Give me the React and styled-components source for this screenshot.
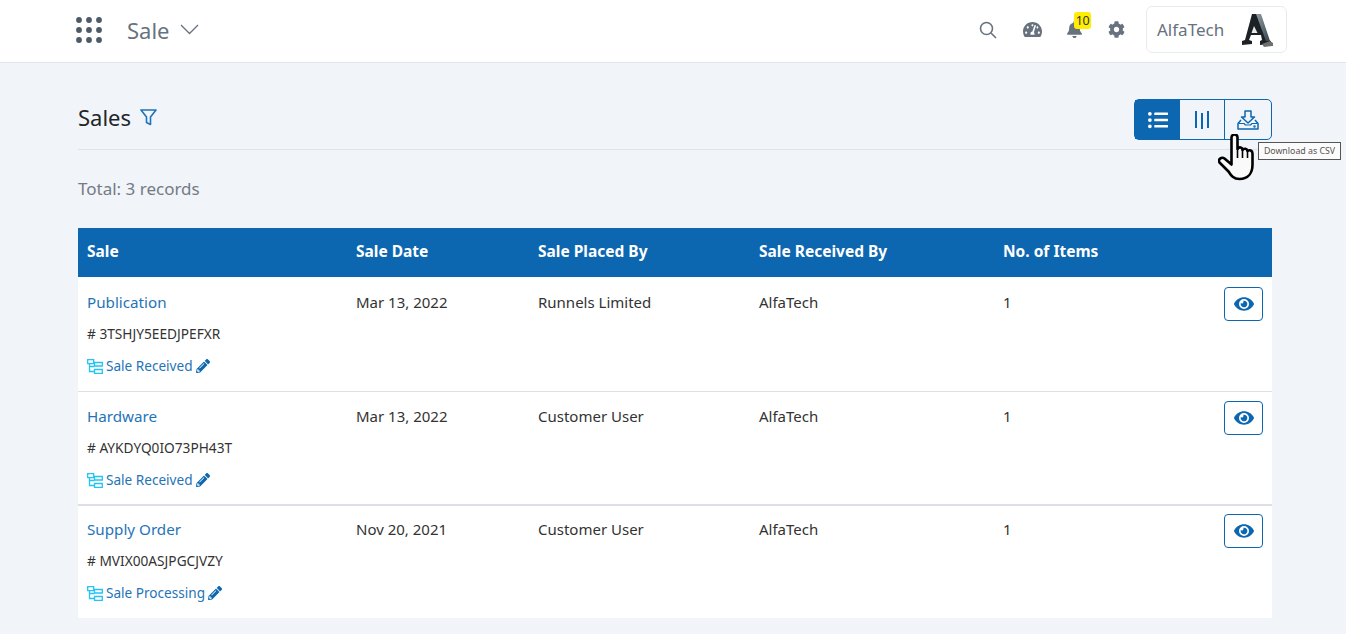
import React from 'react'
import styled, { createGlobalStyle } from 'styled-components'
import { FaBell, FaCog, FaEye, FaListUl, FaPencilAlt, FaTachometerAlt } from 'react-icons/fa'

const GlobalStyle = createGlobalStyle`
    html, body {
        margin: 0;
        padding: 0;
        background: #f1f4f9;
        font-family: "Noto Sans", "Open Sans", sans-serif;
        color: #212529;
    }
`

const Header = styled.header`
    height: 63px;
    box-sizing: border-box;
    background: #fff;
    border-bottom: 1px solid #e0e4ea;
    display: flex;
    align-items: center;
    padding: 0 59px 3px 76px;
`
const Brand = styled.div`
    display: flex;
    align-items: center;
    flex: 1;
    gap: 25px;
`
const ModuleName = styled.div`
    display: flex;
    align-items: center;
    gap: 10px;
    font-size: 22px;
    color: #67727e;
`
const HeaderIcons = styled.div`
    display: flex;
    align-items: center;
    color: #67727e;
`
const HeaderIcon = styled.div`
    position: relative;
    width: ${p => p.$width || 42}px;
    display: flex;
    justify-content: center;
    font-size: 17px;
`
const Badge = styled.span`
    position: absolute;
    top: -9px;
    left: 21px;
    width: 17px;
    height: 17px;
    background: #ffee00;
    color: #333;
    font-size: 12.5px;
    line-height: 17px;
    letter-spacing: -0.5px;
    text-align: center;
    border-radius: 3px;
`
const UserBox = styled.div`
    width: 141px;
    height: 47px;
    margin-left: 9px;
    box-sizing: border-box;
    border: 1px solid #e9ecef;
    border-radius: 6px;
    display: flex;
    align-items: center;
    justify-content: space-between;
    padding: 0 12px 0 10px;
    font-size: 17px;
    color: #67727e;
`
const Main = styled.main`
    padding: 36px 74px 0 78px;
`
const TitleRow = styled.div`
    height: 50px;
    border-bottom: 1px solid #dfe3e8;
    display: flex;
    justify-content: space-between;
    align-items: flex-start;
`
const Title = styled.h1`
    margin: 3px 0 0;
    font-size: 22px;
    line-height: 30px;
    font-weight: 400;
    color: #212529;
    display: flex;
    align-items: center;
    gap: 9px;
`
const ButtonGroup = styled.div`
    position: relative;
    display: flex;
    height: 41px;
    border: 1px solid #0d67b0;
    border-radius: 5px;
    box-sizing: border-box;
`
const GroupButton = styled.div`
    width: ${p => p.$width}px;
    display: flex;
    align-items: center;
    justify-content: center;
    color: ${p => (p.$active ? '#fff' : '#0d67b0')};
    background: ${p => (p.$active ? '#0d67b0' : 'transparent')};
    border-left: ${p => (p.$divider ? '1px solid #0d67b0' : 'none')};
    font-size: 20px;
`
const Tooltip = styled.div`
    position: absolute;
    top: 42px;
    left: 123px;
    width: 83px;
    height: 18px;
    box-sizing: border-box;
    background: #fbfbfb;
    border: 1px solid #555;
    font-size: 8.8px;
    line-height: 16px;
    text-align: center;
    color: #555;
    white-space: nowrap;
`
const CursorWrap = styled.div`
    position: absolute;
    top: 34px;
    left: 83px;
    line-height: 0;
`
const Total = styled.div`
    margin-top: 27px;
    font-size: 17px;
    line-height: 24px;
    color: #737b84;
`
const Table = styled.div`
    margin-top: 27px;
    background: #fff;
`
const columns = '269px 182px 221px 244px 1fr 48px'
const HeadRow = styled.div`
    display: grid;
    grid-template-columns: ${columns};
    height: 49px;
    box-sizing: border-box;
    padding-bottom: 3px;
    align-items: center;
    background: #0d67b0;
    color: #fff;
    font-size: 15.5px;
    font-weight: 700;
`
const HeadCell = styled.div`
    padding-left: 9px;
`
const Row = styled.div`
    display: grid;
    grid-template-columns: ${columns};
    height: ${p => p.$height}px;
    box-shadow: 0 1px #dcdfe3 ${p => (p.$thickTop ? ', inset 0 2px #dcdfe3' : '')};
    font-size: 15px;
`
const Cell = styled.div`
    padding: 14px 0 0 9px;
    line-height: 22px;
    color: #333;
`
const SaleLink = styled.a`
    display: block;
    color: #1f74b8;
    font-size: 15.2px;
`
const SaleCode = styled.div`
    margin-top: 10px;
    font-size: 13.7px;
    color: #333;
`
const Status = styled.div`
    margin-top: 10px;
    display: flex;
    align-items: center;
    gap: 3px;
    color: #1f74b8;
    font-size: 13.6px;
`
const ViewButton = styled.div`
    width: 39px;
    height: 34px;
    margin-top: 10px;
    box-sizing: border-box;
    border: 1px solid #0d67b0;
    border-radius: 4px;
    color: #0d67b0;
    font-size: 20px;
    display: flex;
    align-items: center;
    justify-content: center;
`

const GridIcon = () => (
    <svg width="26" height="26" viewBox="0 0 26 26" fill="#4d5a68">
        {[3, 13, 23].map(y => [3, 13, 23].map(x => <circle key={x + '-' + y} cx={x} cy={y} r="2.9" />))}
    </svg>
)

const Chevron = () => (
    <svg width="19" height="11" viewBox="0 0 19 11" fill="none" stroke="#67727e" strokeWidth="1.3">
        <path d="M1 1l8.5 8.5L18 1" />
    </svg>
)

const SearchIcon = () => (
    <svg width="18" height="18" viewBox="0 0 18 18" fill="none" stroke="#67727e" strokeWidth="1.6">
        <circle cx="7.5" cy="7.5" r="6" />
        <path d="M12 12l5 5" />
    </svg>
)

const FunnelIcon = () => (
    <svg width="17" height="17" viewBox="0 0 17 17" fill="none" stroke="#1f74b8" strokeWidth="1.6" strokeLinejoin="round">
        <path d="M1 1h15l-5.500 7v7.500l-4-2V8z" />
    </svg>
)

const ColumnsIcon = () => (
    <svg width="14" height="20" viewBox="0 0 14 20" fill="none" stroke="#0d67b0" strokeWidth="2">
        <path d="M1 1v17M7 3v16M13 1v17" />
    </svg>
)

const DownloadIcon = () => (
    <svg width="22" height="20" viewBox="0 0 22 20" fill="none" stroke="#0d67b0" strokeWidth="1.5" strokeLinejoin="round">
        <path d="M8 1h6v6h3.500L11 13 4.500 7H8z" />
        <path d="M4 10l-3 3.500V19h20v-5.500L18 10" />
        <path d="M1.500 13.500H7l1.500 1.500h5l1.500-1.500h5.500" strokeWidth="1.2" />
        <circle cx="17.500" cy="16.500" r=".5" />
    </svg>
)

const HandCursor = () => (
    <svg width="37" height="47" viewBox="0 0 37 47">
        <path
            d="M13.500 3.500c0-4 6-4 6 0V15c1.500-2.500 5-2 5 1 1.500-2 4.500-1.500 5 1 2-1.500 5-.5 5 2.500v11c0 8-4 14.500-13 14.500-6 0-8.500-3.500-11-7.500L1.500 28.500c-2-3 2-6 5-4l7 6z"
            fill="#fafafa"
            stroke="#000"
            strokeWidth="2.600"
            strokeLinejoin="round"
        />
        <path d="M19.500 15v9M24.500 16v8M29.500 17v7" stroke="#000" strokeWidth="1.600" />
    </svg>
)

const TreeIcon = () => (
    <svg width="16" height="15" viewBox="0 0 16 15" fill="none" stroke="#22c4f2" strokeWidth="1.3">
        <path d="M.7.700h6v4h-6zM2.500 4.700v7.800h5M2.500 7.500h5" />
        <path d="M7.500 3.500h7.800v3.500H7.500zM7.500 10.500h7.800v3.800H7.500z" />
    </svg>
)

const LogoA = () => (
    <svg width="32" height="34" viewBox="0 0 32 34">
        <defs>
            <linearGradient id="logoLeg" x1="0" y1="0" x2="1" y2="1">
                <stop offset="0" stopColor="#8d9ca3" />
                <stop offset="1" stopColor="#39454b" />
            </linearGradient>
        </defs>
        <path d="M10 1h8l8 26 3 1v3l-11 1v-4l2-1-1-5H9l-2 5 3 1v3L0 32v-4l3-1z" fill="#1b2124" />
        <path d="M14 1h5l9 27h-4z" fill="url(#logoLeg)" />
        <path d="M12 13l-2.500 7h6z" fill="#e9e9e9" />
        <path d="M20 31l8-3 3 2v3l-9 1z" fill="#6f6f6f" />
    </svg>
)

const sales = [
    { name: 'Publication', code: '3TSHJY5EEDJPEFXR', date: 'Mar 13, 2022', by: 'Runnels Limited', status: 'Sale Received', height: 114 },
    { name: 'Hardware', code: 'AYKDYQ0IO73PH43T', date: 'Mar 13, 2022', by: 'Customer User', status: 'Sale Received', height: 113 },
    { name: 'Supply Order', code: 'MVIX00ASJPGCJVZY', date: 'Nov 20, 2021', by: 'Customer User', status: 'Sale Processing', height: 114, thickTop: true },
]

export default function App() {
    return (
        <>
            <GlobalStyle />
            <Header>
                <Brand>
                    <GridIcon />
                    <ModuleName>Sale <Chevron /></ModuleName>
                </Brand>
                <HeaderIcons>
                    <HeaderIcon $width={46}><SearchIcon /></HeaderIcon>
                    <HeaderIcon><FaTachometerAlt size={19} /></HeaderIcon>
                    <HeaderIcon><FaBell /><Badge>10</Badge></HeaderIcon>
                    <HeaderIcon><FaCog /></HeaderIcon>
                </HeaderIcons>
                <UserBox>AlfaTech <LogoA /></UserBox>
            </Header>
            <Main>
                <TitleRow>
                    <Title>Sales <FunnelIcon /></Title>
                    <ButtonGroup>
                        <GroupButton $width={45} $active><FaListUl /></GroupButton>
                        <GroupButton $width={44}><ColumnsIcon /></GroupButton>
                        <GroupButton $width={46} $divider><DownloadIcon /></GroupButton>
                        <CursorWrap><HandCursor /></CursorWrap>
                        <Tooltip>Download as CSV</Tooltip>
                    </ButtonGroup>
                </TitleRow>
                <Total>Total: 3 records</Total>
                <Table>
                    <HeadRow>
                        <HeadCell>Sale</HeadCell>
                        <HeadCell>Sale Date</HeadCell>
                        <HeadCell>Sale Placed By</HeadCell>
                        <HeadCell>Sale Received By</HeadCell>
                        <HeadCell>No. of Items</HeadCell>
                    </HeadRow>
                    {sales.map(sale => (
                        <Row key={sale.code} $height={sale.height} $thickTop={sale.thickTop}>
                            <Cell>
                                <SaleLink>{sale.name}</SaleLink>
                                <SaleCode># {sale.code}</SaleCode>
                                <Status><TreeIcon /> {sale.status} <FaPencilAlt size={14} color="#0d67b0" /></Status>
                            </Cell>
                            <Cell>{sale.date}</Cell>
                            <Cell>{sale.by}</Cell>
                            <Cell>AlfaTech</Cell>
                            <Cell>1</Cell>
                            <div><ViewButton><FaEye /></ViewButton></div>
                        </Row>
                    ))}
                </Table>
            </Main>
        </>
    )
}
